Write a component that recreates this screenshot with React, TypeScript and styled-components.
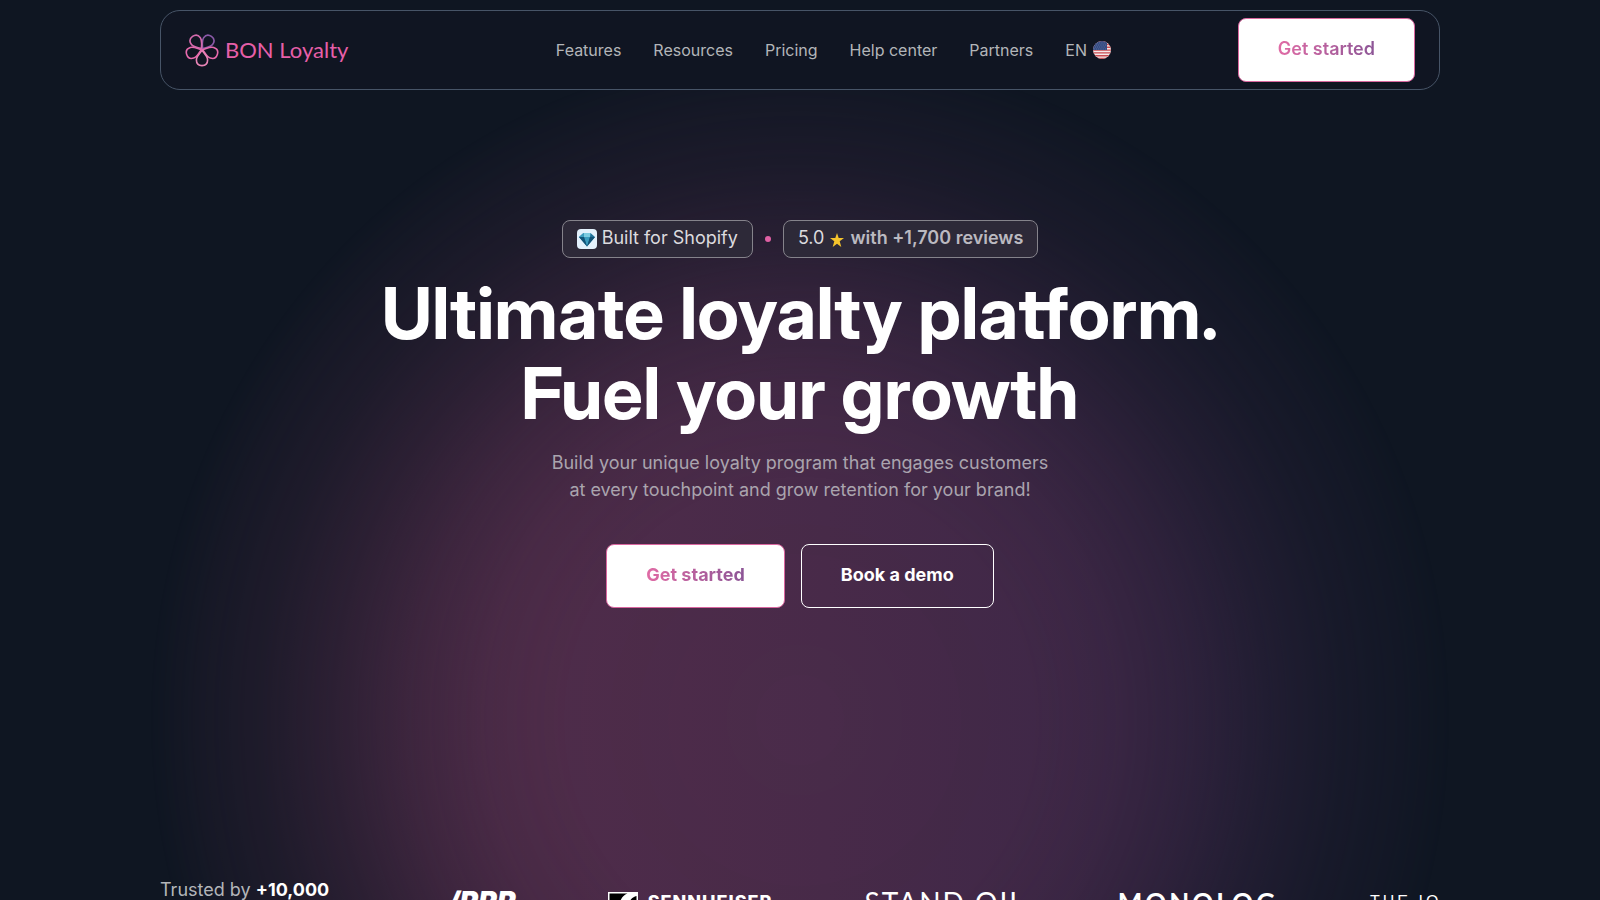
import React from "react";
import styled, { createGlobalStyle, css } from "styled-components";

const GlobalStyle = createGlobalStyle`
  *, *::before, *::after { box-sizing: border-box; }
  body {
    margin: 0;
    background: #0f1622;
    color: #fff;
    font-family: Inter, "Liberation Sans", sans-serif;
    font-size: 18px;
    line-height: 27px;
  }
`;

const Page = styled.div`
  position: relative;
  isolation: isolate;
  min-height: 100vh;
  overflow: hidden;
  padding-top: 10px;
`;

const Glow = styled.div`
  position: absolute;
  z-index: -1;
  top: 50px;
  left: 50%;
  width: 1300px;
  height: 1340px;
  transform: translateX(-50%);
  background: linear-gradient(90deg, #582e4c 0%, #512d4b 30%, #492b4a 52%, #3f2848 75%, #35274a 100%);
  mask-image: radial-gradient(
    closest-side,
    #000 0%,
    rgba(0, 0, 0, 0.97) 36%,
    rgba(0, 0, 0, 0.88) 48%,
    rgba(0, 0, 0, 0.68) 60%,
    rgba(0, 0, 0, 0.42) 72%,
    rgba(0, 0, 0, 0.22) 83%,
    rgba(0, 0, 0, 0.1) 93%,
    transparent 100%
  );
`;

const Container = styled.div`
  width: 80%;
  margin: 0 auto;
`;

const Header = styled.header`
  display: flex;
  align-items: center;
  width: 80%;
  height: 80px;
  margin: 0 auto;
  padding: 0 24px;
  border: 1px solid #475467;
  border-radius: 20px;
  background: #101522;
`;

const Brand = styled.a`
  display: flex;
  align-items: center;
  gap: 6px;
  flex: 0 0 244px;
  color: #e65fa8;
  font-family: Lato, sans-serif;
  font-size: 22px;
  line-height: 32px;
  text-decoration: none;
`;

const Nav = styled.nav`
  display: flex;
  flex: 1;
  align-items: center;
  justify-content: center;
  gap: 32px;
`;

const navItem = css`
  color: #b3b5b9;
  font-family: inherit;
  font-size: 16px;
  line-height: 24px;
`;

const NavLink = styled.a`
  ${navItem}
  text-decoration: none;
`;

const LanguageButton = styled.button`
  ${navItem}
  display: flex;
  align-items: center;
  gap: 6px;
  padding: 0;
  border: 0;
  background: none;
`;

const Button = styled.button<{ $outline?: boolean; $weight?: number }>`
  height: 64px;
  padding: 0 39px 4px;
  border: 1px solid ${(p) => (p.$outline ? "#fff" : "#d9669f")};
  border-radius: 8px;
  background: ${(p) => (p.$outline ? "transparent" : "#fff")};
  color: #fff;
  font-family: inherit;
  font-size: 18px;
  font-weight: ${(p) => p.$weight ?? 700};
  line-height: 27px;
  white-space: nowrap;
`;

const GradientText = styled.span`
  background: linear-gradient(90deg, #e06ba5, #8c5596);
  background-clip: text;
  color: transparent;
`;

const Hero = styled.main`
  display: flex;
  flex-direction: column;
  align-items: center;
  padding-top: 130px;
  text-align: center;
`;

const Badges = styled.div`
  display: flex;
  align-items: center;
  gap: 12px;
`;

const Badge = styled.div`
  display: flex;
  align-items: center;
  gap: 5px;
  height: 38px;
  padding: 0 14px;
  border: 1px solid #85838b;
  border-radius: 8px;
  background: #2d2938;
  color: #dcdbdf;
  line-height: 34px;

  span, strong { padding-bottom: 2px; }
  strong { color: #bbb9c0; font-weight: 600; }
`;

const Dot = styled.span`
  width: 6px;
  height: 6px;
  border-radius: 50%;
  background: #e060a4;
`;

const Title = styled.h1`
  margin: 15px 0 0;
  font-family: "Inter Display", Inter, sans-serif;
  font-size: 72px;
  font-weight: 700;
  line-height: 80px;
`;

const Lead = styled.p`
  margin: 16px 0 0;
  color: #aaa4ae;
`;

const Actions = styled.div`
  display: flex;
  gap: 16px;
  margin-top: 41px;
`;

const Trusted = styled(Container)`
  display: flex;
  align-items: flex-start;
  gap: 88px;
  height: 60px;
  margin-top: 268px;
  overflow: hidden;
  color: #b3b5b9;

  strong { color: #fff; font-weight: 700; }
`;

const TrustedText = styled.p`
  flex: 0 0 200px;
  margin: 0;
`;

const Logos = styled.div`
  display: flex;
  flex: 1;
  gap: 92px;
  align-items: flex-start;
  padding-top: 10px;
  white-space: nowrap;
  color: #fff;
`;

const Wordmark = styled.span<{ $font: string; $size: number; $weight: number; $track?: number; $italic?: boolean }>`
  font-family: ${(p) => p.$font}, sans-serif;
  font-size: ${(p) => p.$size}px;
  font-weight: ${(p) => p.$weight};
  font-style: ${(p) => (p.$italic ? "italic" : "normal")};
  letter-spacing: ${(p) => p.$track ?? 0}px;
  line-height: 32px;
`;

const AudioBrand = styled.span`
  display: flex;
  align-items: flex-start;
  gap: 10px;

  svg { margin-top: 6px; }
`;

const petals: [number, string][] = [
  [36, "#8b5aa8"],
  [108, "#e86aae"],
  [180, "#e884b6"],
  [252, "#e86aae"],
  [324, "#d56aad"],
];

function Flower() {
  return (
    <svg width="34" height="34" viewBox="0 0 34 34" fill="none" aria-hidden="true">
      {petals.map(([angle, color]) => (
        <path
          key={angle}
          d="M17 15.8 C15.5 13 11.400 10 11.400 6 C11.400 2.400 13.800 .4 17 .4 C20.200 .4 22.600 2.400 22.600 6 C22.600 10 18.500 13 17 15.800Z"
          transform={`rotate(${angle} 17 16.5)`}
          stroke={color}
          strokeWidth="1.6"
        />
      ))}
    </svg>
  );
}

function Flag() {
  return (
    <svg width="18" height="18" viewBox="0 0 18 18" aria-hidden="true">
      <clipPath id="flag-round"><circle cx="9" cy="9" r="9" /></clipPath>
      <g clipPath="url(#flag-round)">
        <path fill="#f5e9ea" d="M0 0h18v18H0z" />
        <path stroke="#c94b50" strokeWidth="1.4" d="M0 .7h18M0 3.5h18M0 6.3h18M0 9.1h18M0 11.9h18M0 14.7h18M0 17.5h18" />
        <path fill="#354b83" d="M0 0h14v9H0z" />
        <path stroke="#8290b4" strokeWidth=".7" strokeDasharray=".7 1.5" d="M2 2h11M1 4h12M2 6h11M1 8h12" />
      </g>
    </svg>
  );
}

function Diamond() {
  return (
    <svg width="20" height="20" viewBox="0 0 20 20" aria-hidden="true">
      <rect width="20" height="20" rx="4" fill="#e3f1fc" />
      <path fill="#1f7299" d="M6.500 4h7L18 8 10 17.500 2 8z" />
      <path fill="#7ccbe0" d="M6.500 4h7L13 8H7z" />
      <path fill="#3c9dbf" d="M6.500 4 2 8H7zM7 8h6l-3 9.500z" />
      <path fill="#125478" d="M13 8h5L10 17.500zM2 8H7l3 9.500z" />
    </svg>
  );
}

function Star() {
  return (
    <svg width="16" height="16" viewBox="-1 -2 16 16" aria-hidden="true">
      <path fill="#f5c42c" d="m7 0 1.7 5H14L9.700 8.300 11.300 14 7 10.700 2.700 14 4.300 8.300 0 5h5.300z" />
    </svg>
  );
}

function SoundMark() {
  return (
    <svg width="30" height="24" viewBox="0 0 30 24" aria-hidden="true">
      <path fill="#fff" d="M0 0h30v24H0z" />
      <path fill="#000" d="M1.500 1.500h18c-5 2-6 5-8 9s-5 9-10 10zM28.500 4v18H10c6-1 8-4 10-9s4-8 8.500-9z" />
    </svg>
  );
}

export default function App() {
  return (
    <Page>
      <GlobalStyle />
      <Glow />
      <Header>
        <Brand href="#">
          <Flower />
          <span>BON Loyalty</span>
        </Brand>
        <Nav>
          {["Features", "Resources", "Pricing", "Help center", "Partners"].map((label) => (
            <NavLink href="#" key={label}>{label}</NavLink>
          ))}
          <LanguageButton type="button">EN <Flag /></LanguageButton>
        </Nav>
        <Button type="button" $weight={600}><GradientText>Get started</GradientText></Button>
      </Header>

      <Hero>
        <Badges>
          <Badge><Diamond /><span>Built for Shopify</span></Badge>
          <Dot />
          <Badge><span>5.0</span><Star /><strong>with +1,700 reviews</strong></Badge>
        </Badges>
        <Title>Ultimate loyalty platform.<br />Fuel your growth</Title>
        <Lead>Build your unique loyalty program that engages customers<br />at every touchpoint and grow retention for your brand!</Lead>
        <Actions>
          <Button type="button"><GradientText>Get started</GradientText></Button>
          <Button type="button" $outline>Book a demo</Button>
        </Actions>
      </Hero>

      <Trusted as="section">
        <TrustedText>Trusted by <strong>+10,000</strong></TrustedText>
        <Logos>
          <Wordmark $font="Inter" $size={28} $weight={900} $italic>/RRR</Wordmark>
          <AudioBrand>
            <SoundMark />
            <Wordmark $font="Inter" $size={18} $weight={800} $track={1}>SENNHEISER</Wordmark>
          </AudioBrand>
          <Wordmark $font="Lato" $size={28} $weight={400} $track={2}>STAND OIL</Wordmark>
          <Wordmark $font="Lato" $size={26} $weight={700} $track={3}>MONOLOG</Wordmark>
          <Wordmark $font='"Liberation Sans Narrow"' $size={16} $weight={400} $track={3}>THE IO</Wordmark>
        </Logos>
      </Trusted>
    </Page>
  );
}
